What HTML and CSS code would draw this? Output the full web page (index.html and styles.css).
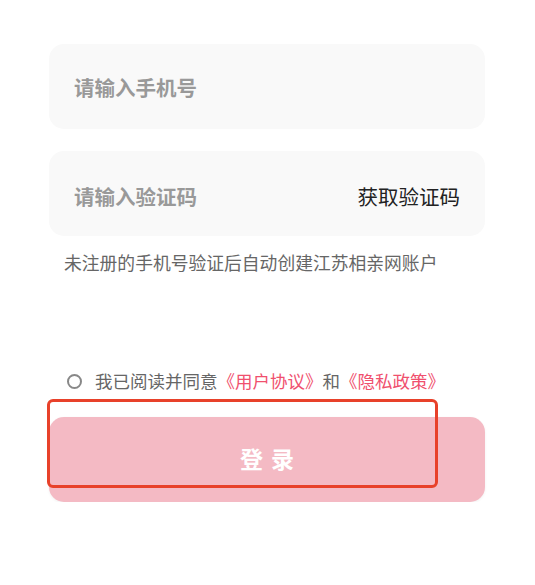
FILE: index.html
```html
<!DOCTYPE html>
<html lang="zh-CN">
<head>
  <meta charset="UTF-8" />
  <meta name="viewport" content="width=device-width, initial-scale=1.0" />
  <title>登录</title>
  <link rel="stylesheet" href="styles.css">
</head>
<body>
  <div class="login">
    <div class="field">
      <input class="field-input" type="tel" placeholder="请输入手机号" />
    </div>

    <div class="field field-code">
      <input class="field-input" type="text" placeholder="请输入验证码" />
      <span class="get-code">获取验证码</span>
    </div>

    <p class="hint">未注册的手机号验证后自动创建江苏相亲网账户</p>

    <label class="agree">
      <span class="radio"></span>
      <span>我已阅读并同意<a class="link">《用户协议》</a>和<a class="link">《隐私政策》</a></span>
    </label>

    <button class="login-button">登录</button>

    <div class="highlight"></div>
  </div>
</body>
</html>
```

FILE: styles.css
```css
body {
  margin: 0;
  background: #fff;
  font-family: "Noto Sans CJK SC", "Noto Sans", sans-serif;
}

.login {
  position: relative;
  padding: 44px 50px 0 49px;
}

.field {
  display: flex;
  align-items: center;
  height: 85px;
  margin-bottom: 22px;
  padding: 0 25px;
  background: #f9f9f9;
  border-radius: 15px;
  box-sizing: border-box;
}

.field-code {
  padding-top: 4px;
}

.field-input {
  flex: 1;
  min-width: 0;
  border: none;
  outline: none;
  background: transparent;
  padding: 0;
  font-family: inherit;
  font-size: 20.5px;
  color: #333;
}

.field-input::placeholder {
  color: #999;
  font-weight: 600;
}

.get-code {
  font-size: 20.5px;
  color: #222;
}

.hint {
  margin: -9px 0 0 15px;
  font-size: 17.8px;
  line-height: 26px;
  color: #666;
}

.agree {
  display: flex;
  align-items: center;
  margin: 93px 0 0 18px;
  font-size: 17.5px;
  line-height: 26px;
  color: #666;
}

.radio {
  width: 11px;
  height: 11px;
  margin-right: 13px;
  border: 2px solid #888;
  border-radius: 50%;
}

.link {
  color: #f0506e;
}

.login-button {
  display: block;
  width: 100%;
  height: 85px;
  margin-top: 23px;
  border: none;
  border-radius: 15px;
  background: #f4bac4;
  box-shadow: 0 1px 3px rgba(0, 0, 0, 0.06);
  color: #fff;
  font-family: inherit;
  font-size: 23px;
  font-weight: bold;
  letter-spacing: 8px;
  text-indent: 8px;
  padding-bottom: 4px;
}

.highlight {
  position: absolute;
  left: 47px;
  top: 399px;
  width: 385px;
  height: 83px;
  border: 3px solid #e8412a;
  border-radius: 6px;
}
```
